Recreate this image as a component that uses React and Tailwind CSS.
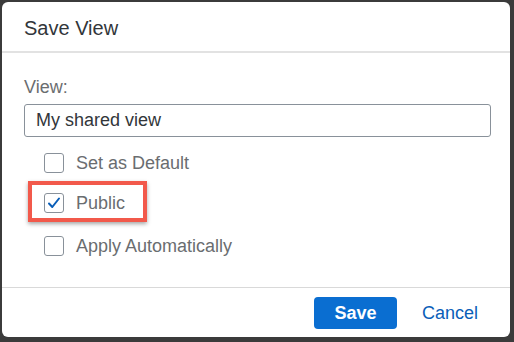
import React from "react";

function Box({ checked }) {
  return (
    <div className="w-[20px] h-[20px] rounded-[3px] border border-[#89919a] bg-white flex items-center justify-center shrink-0">
      {checked && (
        <svg width="14" height="14" viewBox="0 0 14 14">
          <path d="M2 7.5 L5.3 11 L12 2.5" fill="none" stroke="#0a5eb8" strokeWidth="2" strokeLinecap="round" strokeLinejoin="round" />
        </svg>
      )}
    </div>
  );
}

function Row({ label, checked }) {
  return (
    <div className="flex items-center gap-[12px]">
      <Box checked={checked} />
      <span className="text-[18px] text-[#6a6d70] leading-none">{label}</span>
    </div>
  );
}

export default function App() {
  return (
    <div
      className="w-[514px] h-[342px] bg-[#3b3b3b] pt-[2px] pl-[2px] pr-[4px] pb-[5px]"
      style={{ fontFamily: '"Liberation Sans", Arial, sans-serif' }}
    >
      <div className="w-full h-full bg-white rounded-[6px] flex flex-col overflow-hidden">
        <div className="h-[51px] flex items-center pl-[22px] pt-[2px] border-b-2 border-[#e2e2e2]">
          <span className="text-[20px] text-[#32363a]">Save View</span>
        </div>
        <div className="flex-1 flex flex-col pl-[22px] pr-[19px] pt-[25px] border-b border-[#d9d9d9]">
          <div className="text-[18px] text-[#6a6d70] leading-none">View:</div>
          <div className="mt-[8px] h-[33px] border border-[#89919a] rounded-[3px] flex items-center pl-[11px]">
            <span className="text-[18px] text-[#32363a]">My shared view</span>
          </div>
          <div className="mt-[16px] pl-[20px]">
            <Row label="Set as Default" />
          </div>
          <div className="mt-[8px] ml-[4px] w-[119px] h-[41px] border-[4px] border-[#f2594b] shadow-[0_2px_4px_rgba(0,0,0,0.35)] flex items-center pl-[12px] pt-[2px]">
            <Row label="Public" checked />
          </div>
          <div className="mt-[14px] pl-[20px]">
            <Row label="Apply Automatically" />
          </div>
        </div>
        <div className="h-[49px] flex items-center justify-end pr-[32px]">
          <button className="w-[83px] h-[32px] rounded-[4px] bg-[#0a6ed1] text-white font-bold text-[18px] mt-[1px]">Save</button>
          <button className="ml-[25px] text-[18px] text-[#0a5eb8] mt-[1px]">Cancel</button>
        </div>
      </div>
    </div>
  );
}
